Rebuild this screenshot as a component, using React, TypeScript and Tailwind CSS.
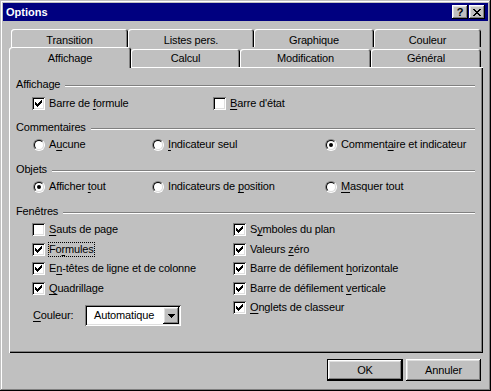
import React from "react";

const RAISED =
  "shadow-[inset_-1px_-1px_#000,inset_1px_1px_#fff,inset_-2px_-2px_#808080,inset_2px_2px_#dfdfdf]";
const SUNKEN =
  "shadow-[inset_1px_1px_#808080,inset_-1px_-1px_#fff,inset_2px_2px_#000,inset_-2px_-2px_#dfdfdf]";

function L({ t }: { t: string }) {
  const i = t.indexOf("&");
  if (i < 0) return <>{t}</>;
  return (
    <>
      {t.slice(0, i)}
      <span className="underline underline-offset-[2px] decoration-1">{t[i + 1]}</span>
      {t.slice(i + 2)}
    </>
  );
}

function Check({ on }: { on?: boolean }) {
  return (
    <span className={"relative block w-[13px] h-[13px] bg-white shrink-0 " + SUNKEN}>
      {on && (
        <svg
          className="absolute left-[3px] top-[3px]"
          width="7"
          height="7"
          viewBox="0 0 7 7"
          shapeRendering="crispEdges"
        >
          <path
            d="M6 0h1v1h-1z M5 1h2v1h-2z M0 2h1v1h-1z M4 2h3v1h-3z M0 3h2v1h-2z M3 3h3v1h-3z M0 4h5v1h-5z M1 5h3v1h-3z M2 6h1v1h-1z"
            fill="#000"
          />
        </svg>
      )}
    </span>
  );
}

function Radio({ on }: { on?: boolean }) {
  return (
    <span className="relative block w-[12px] h-[12px] rounded-full shrink-0 border border-t-[#808080] border-l-[#808080] border-b-white border-r-white">
      <span className="absolute inset-0 rounded-full border border-t-black border-l-black border-b-[#dfdfdf] border-r-[#dfdfdf] bg-white" />
      {on && <span className="absolute left-[3px] top-[3px] w-[4px] h-[4px] rounded-full bg-black" />}
    </span>
  );
}

function Opt({
  radio,
  on,
  label,
  focus,
  className = "",
}: {
  radio?: boolean;
  on?: boolean;
  label: string;
  focus?: boolean;
  className?: string;
}) {
  return (
    <div className={"flex items-center h-[13px] shrink-0 " + className}>
      <span className="w-[13px] h-[13px] flex items-center justify-end shrink-0">
        {radio ? <Radio on={on} /> : <Check on={on} />}
      </span>
      {focus ? (
        <span className="ml-[3px] border border-dotted border-black leading-[13px] whitespace-nowrap">
          <L t={label} />
        </span>
      ) : (
        <span className="ml-[4px] whitespace-nowrap">
          <L t={label} />
        </span>
      )}
    </div>
  );
}

function Group({ title, className = "" }: { title: string; className?: string }) {
  return (
    <div className={"flex items-center h-[13px] " + className}>
      <span className="whitespace-nowrap">{title}</span>
      <div className="flex-1 ml-[5px] mt-[2px] h-[2px] border-t border-t-[#808080] border-b border-b-white" />
    </div>
  );
}

function Tab({ label, className = "" }: { label: string; className?: string }) {
  return (
    <div
      className={
        "flex items-center justify-center rounded-t-[3px] bg-[#c0c0c0] shadow-[inset_1px_1px_#fff,inset_-1px_0_#000,inset_-2px_0_#808080] " +
        className
      }
    >
      {label}
    </div>
  );
}

export default function App() {
  return (
    <div
      className={
        "w-[491px] h-[391px] bg-[#c0c0c0] flex flex-col text-black text-[11px] leading-[13px] tracking-[-0.15px] font-['Liberation_Sans',Arial,sans-serif] shadow-[inset_-1px_-1px_#000,inset_1px_1px_#c0c0c0,inset_-2px_-2px_#808080,inset_2px_2px_#fff]"
      }
    >
      {/* title bar */}
      <div className="mx-[3px] mt-[3px] h-[18px] bg-[#000080] flex items-center pl-[3px] pr-[3px]">
        <span className="flex-1 text-white font-bold text-[11px] tracking-normal">Options</span>
        <div className="flex gap-[1px]">
          <div className={"w-[16px] h-[14px] bg-[#c0c0c0] flex items-center justify-center font-bold text-[11px] leading-[12px] " + RAISED}>
            ?
          </div>
          <div className={"w-[16px] h-[14px] bg-[#c0c0c0] flex items-center justify-center " + RAISED}>
            <svg width="8" height="7" viewBox="0 0 8 7" shapeRendering="crispEdges">
              <path
                d="M0 0h2v1H0z M6 0h2v1H6z M1 1h2v1H1z M5 1h2v1H5z M2 2h4v1H2z M3 3h2v1H3z M2 4h4v1H2z M1 5h2v1H1z M5 5h2v1H5z M0 6h2v1H0z M6 6h2v1H6z"
                fill="#000"
              />
            </svg>
          </div>
        </div>
      </div>

      {/* tabs back row */}
      <div className="flex ml-[11px] mt-[8px] h-[18px]">
        <Tab label="Transition" className="w-[117px] h-[18px] pt-[4px]" />
        <Tab label="Listes pers." className="w-[126px] h-[18px] pt-[4px]" />
        <Tab label="Graphique" className="w-[120px] h-[18px] pt-[4px]" />
        <Tab label="Couleur" className="w-[107px] h-[18px] pt-[4px]" />
      </div>

      {/* tabs front row */}
      <div className="flex items-start ml-[9px] h-[20px]">
        <div className="relative z-10 w-[122px] h-[21px] flex items-center justify-center pt-[1px] rounded-t-[3px] bg-[#c0c0c0] shadow-[inset_1px_1px_#fff,inset_-1px_0_#000,inset_-2px_0_#808080]">
          Affichage
        </div>
        <Tab label="Calcul" className="w-[109px] h-[18px] mt-[2px] pt-[1px]" />
        <Tab label="Modification" className="w-[131px] h-[18px] mt-[2px] pt-[1px]" />
        <Tab label="Général" className="w-[110px] h-[18px] mt-[2px] pt-[1px]" />
      </div>

      {/* panel */}
      <div className="ml-[9px] w-[474px] h-[286px] flex flex-col pl-[7px] pr-[8px] pt-[11px] shadow-[inset_1px_1px_#fff,inset_-1px_-1px_#000,inset_-2px_-2px_#808080]">
        <Group title="Affichage" />
        <div className="flex mt-[6px] pl-[16px]">
          <Opt on label="Barre de &formule" className="w-[181px]" />
          <Opt label="&Barre d'état" />
        </div>

        <Group title="Commentaires" className="mt-[11px]" />
        <div className="flex mt-[4px] pl-[16px]">
          <Opt radio label="A&ucune" className="w-[119px]" />
          <Opt radio label="&Indicateur seul" className="w-[173px]" />
          <Opt radio on label="Comment&aire et indicateur" />
        </div>

        <Group title="Objets" className="mt-[12px]" />
        <div className="flex mt-[4px] pl-[16px]">
          <Opt radio on label="Afficher &tout" className="w-[119px]" />
          <Opt radio label="Indicateurs de &position" className="w-[173px]" />
          <Opt radio label="&Masquer tout" />
        </div>

        <Group title="Fenêtres" className="mt-[12px]" />
        <div className="flex mt-[5px] pl-[16px]">
          <div className="flex flex-col w-[201px]">
            <Opt label="&Sauts de page" />
            <Opt on focus label="Fo&rmules" className="mt-[7px]" />
            <Opt on label="E&n-têtes de ligne et de colonne" className="mt-[6px]" />
            <Opt on label="&Quadrillage" className="mt-[7px]" />
            <div className="flex items-center mt-[10px] pl-[1px]">
              <span className="w-[52px]">
                <L t="&Couleur:" />
              </span>
              <div className={"w-[96px] h-[21px] bg-white flex items-center p-[2px] " + SUNKEN}>
                <span className="flex-1 pl-[7px] whitespace-nowrap">Automatique</span>
                <span className={"w-[16px] h-[17px] bg-[#c0c0c0] flex items-center justify-center " + RAISED}>
                  <svg width="7" height="4" viewBox="0 0 7 4" shapeRendering="crispEdges">
                    <path d="M0 0h7v1H0z M1 1h5v1H1z M2 2h3v1H2z M3 3h1v1H3z" fill="#000" />
                  </svg>
                </span>
              </div>
            </div>
          </div>
          <div className="flex flex-col">
            <Opt on label="S&ymboles du plan" />
            <Opt on label="Valeurs &zéro" className="mt-[7px]" />
            <Opt on label="Barre de défilement &horizontale" className="mt-[6px]" />
            <Opt on label="Barre de défilement &verticale" className="mt-[7px]" />
            <Opt on label="&Onglets de classeur" className="mt-[6px]" />
          </div>
        </div>
      </div>

      {/* buttons */}
      <div className="flex justify-end gap-[3px] mt-[6px] pr-[10px]">
        <button className="w-[76px] h-[22px] bg-[#c0c0c0] flex items-center justify-center shadow-[inset_0_0_0_1px_#000,inset_-2px_-2px_#000,inset_2px_2px_#fff,inset_-3px_-3px_#808080,inset_3px_3px_#dfdfdf]">
          OK
        </button>
        <button className={"w-[75px] h-[22px] bg-[#c0c0c0] flex items-center justify-center " + RAISED}>
          Annuler
        </button>
      </div>
    </div>
  );
}
